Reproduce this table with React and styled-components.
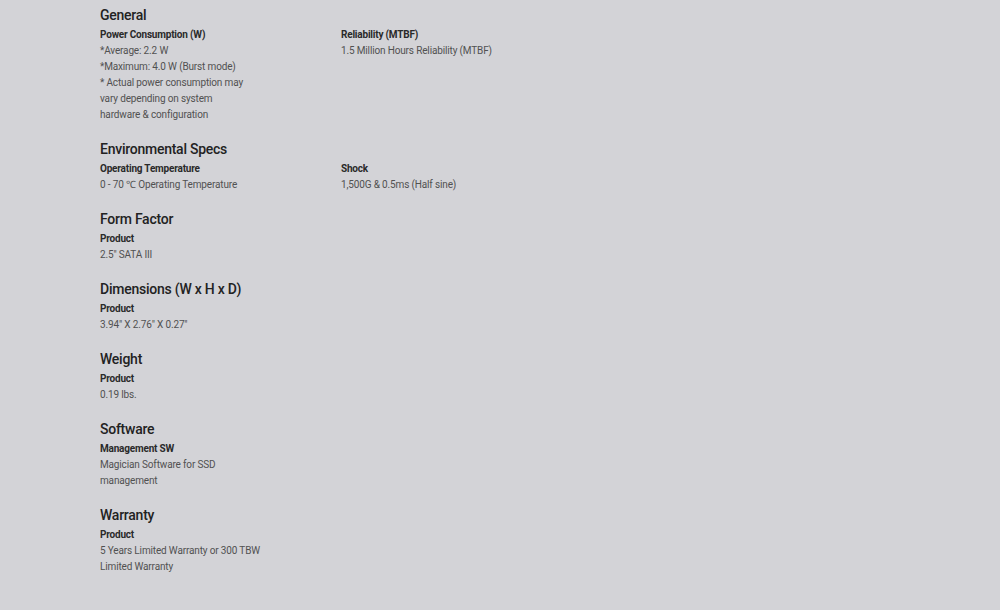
import React from "react";
import styled, { createGlobalStyle } from "styled-components";

const GlobalStyle = createGlobalStyle`
  html, body {
    margin: 0;
    padding: 0;
    background: #d3d3d7;
  }
  body {
    font-family: Roboto, "Liberation Sans", sans-serif;
    color: #333;
  }
`;

const Page = styled.div`
  width: 1000px;
  min-height: 610px;
  padding: 5px 0 0 100px;
  box-sizing: border-box;
`;

const Section = styled.section`
  margin-bottom: 16px;
`;

const Heading = styled.h3`
  margin: 0 0 2px;
  font-size: 14px;
  line-height: 20px;
  font-weight: 500;
  letter-spacing: -0.25px;
  color: #222;
`;

const SpecGrid = styled.div`
  display: grid;
  grid-template-columns: 241px 241px;
`;

const Spec = styled.div`
  font-size: 10px;
  line-height: 16px;
  letter-spacing: -0.15px;
  white-space: nowrap;
`;

const Label = styled.div`
  font-weight: 700;
  letter-spacing: -0.2px;
  color: #2a2a2a;
`;

const Value = styled.div`
  color: #515151;
`;

const sections = [
  {
    title: "General",
    specs: [
      {
        label: "Power Consumption (W)",
        lines: [
          "*Average: 2.2 W",
          "*Maximum: 4.0 W (Burst mode)",
          "* Actual power consumption may",
          "vary depending on system",
          "hardware & configuration",
        ],
      },
      { label: "Reliability (MTBF)", lines: ["1.5 Million Hours Reliability (MTBF)"] },
    ],
  },
  {
    title: "Environmental Specs",
    specs: [
      { label: "Operating Temperature", lines: ["0 - 70 \u2103 Operating Temperature"] },
      { label: "Shock", lines: ["1,500G & 0.5ms (Half sine)"] },
    ],
  },
  { title: "Form Factor", specs: [{ label: "Product", lines: ["2.5\" SATA III"] }] },
  { title: "Dimensions (W x H x D)", specs: [{ label: "Product", lines: ["3.94\" X 2.76\" X 0.27\""] }] },
  { title: "Weight", specs: [{ label: "Product", lines: ["0.19 lbs."] }] },
  { title: "Software", specs: [{ label: "Management SW", lines: ["Magician Software for SSD", "management"] }] },
  { title: "Warranty", specs: [{ label: "Product", lines: ["5 Years Limited Warranty or 300 TBW", "Limited Warranty"] }] },
];

export default function App() {
  return (
    <>
      <GlobalStyle />
      <Page>
        {sections.map((s) => (
          <Section key={s.title}>
            <Heading>{s.title}</Heading>
            <SpecGrid>
              {s.specs.map((sp) => (
                <Spec key={sp.label}>
                  <Label>{sp.label}</Label>
                  {sp.lines.map((l) => (
                    <Value key={l}>{l}</Value>
                  ))}
                </Spec>
              ))}
            </SpecGrid>
          </Section>
        ))}
      </Page>
    </>
  );
}
